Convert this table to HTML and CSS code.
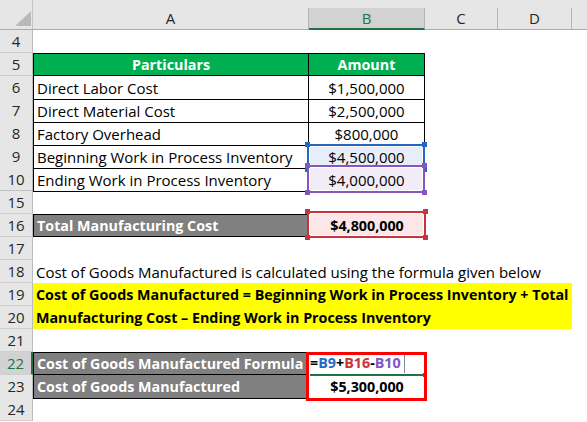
FILE: index.html
```html
<!DOCTYPE html>
<html>
<head>
<meta charset="utf-8">
<link rel="stylesheet" href="styles.css">
</head>
<body>
<div class="sheet">
  <div class="row colhead">
    <div class="corner"><svg width="33" height="30" viewBox="0 0 33 30"><polygon points="15,26 31,26 31,11" fill="#b9b9b9"/></svg></div>
    <div class="ch">A</div>
    <div class="ch sel">B</div>
    <div class="ch">C</div>
    <div class="ch">D</div>
    <div class="ch last"></div>
  </div>

  <div class="row"><div class="rh">4</div></div>

  <div class="row">
    <div class="rh">5</div>
    <div class="c th first">Particulars</div>
    <div class="c th">Amount</div>
  </div>
  <div class="row">
    <div class="rh">6</div>
    <div class="c td first">Direct Labor Cost</div>
    <div class="c td num">$1,500,000</div>
  </div>
  <div class="row">
    <div class="rh">7</div>
    <div class="c td first">Direct Material Cost</div>
    <div class="c td num">$2,500,000</div>
  </div>
  <div class="row">
    <div class="rh">8</div>
    <div class="c td first">Factory Overhead</div>
    <div class="c td num">$800,000</div>
  </div>
  <div class="row">
    <div class="rh">9</div>
    <div class="c td first">Beginning Work in Process Inventory</div>
    <div class="c td num ref blue"><span class="hl"><i class="h tl"></i><i class="h tr"></i><i class="h bl"></i><i class="h br"></i></span><span class="v">$4,500,000</span></div>
  </div>
  <div class="row">
    <div class="rh hidden-after">10</div>
    <div class="c td first">Ending Work in Process Inventory</div>
    <div class="c td num ref purple"><span class="hl"><i class="h tl"></i><i class="h tr"></i><i class="h bl"></i><i class="h br"></i></span><span class="v">$4,000,000</span></div>
  </div>

  <div class="row"><div class="rh">15</div></div>

  <div class="row">
    <div class="rh">16</div>
    <div class="c grey first top">Total Manufacturing Cost</div>
    <div class="c num bold ref red"><span class="hl"><i class="h tl"></i><i class="h tr"></i><i class="h bl"></i><i class="h br"></i></span><span class="v">$4,800,000</span></div>
  </div>

  <div class="row"><div class="rh">17</div></div>

  <div class="row">
    <div class="rh">18</div>
    <div class="c span">Cost of Goods Manufactured is calculated using the formula given below</div>
  </div>
  <div class="row">
    <div class="rh">19</div>
    <div class="c yellow">Cost of Goods Manufactured = Beginning Work in Process Inventory + Total</div>
  </div>
  <div class="row">
    <div class="rh">20</div>
    <div class="c yellow">Manufacturing Cost – Ending Work in Process Inventory</div>
  </div>

  <div class="row"><div class="rh">21</div></div>

  <div class="row">
    <div class="rh active">22</div>
    <div class="c grey first top">Cost of Goods Manufactured Formula</div>
    <div class="c formula"><span>=</span><span class="fb">B9</span><span>+</span><span class="fr">B16</span><span>-</span><span class="fp">B10</span><span class="caret"></span><span class="active-edge"></span></div>
  </div>
  <div class="row">
    <div class="rh">23</div>
    <div class="c grey first">Cost of Goods Manufactured</div>
    <div class="c num bold">$5,300,000</div>
  </div>

  <div class="row"><div class="rh">24</div></div>

  <div class="range-box"></div>
</div>
</body>
</html>
```

FILE: styles.css
```css
* { box-sizing: border-box; }

html, body {
  margin: 0;
  padding: 0;
  background: #ffffff;
}

body {
  font-family: "Open Sans", "Liberation Sans", sans-serif;
  font-size: 15px;
  color: #000;
  overflow: hidden;
}

.sheet {
  position: relative;
  width: 587px;
  height: 422px;
  overflow: hidden;
}

.row {
  display: grid;
  grid-template-columns: 33px 276px 116px 73px 74px 1fr;
  height: 23px;
}

/* column header strip */
.colhead {
  height: 30px;
  background: #e6e6e6;
  border-bottom: 1px solid #ababab;
}

.corner {
  border-right: 1px solid #c4c4c4;
  height: 29px;
}

.corner svg { display: block; }

.ch {
  margin-top: 8px;
  height: 21px;
  border-right: 1px solid #b4b4b4;
  text-align: center;
  line-height: 21px;
  color: #262626;
}

.ch.sel {
  background: #d2d2d2;
  color: #217346;
  border-bottom: 2px solid #217346;
  height: 22px;
  line-height: 21px;
}

.ch.last { border-right: none; }

/* row headers */
.rh {
  background: #e6e6e6;
  border-right: 1px solid #bcbcbc;
  border-bottom: 1px solid #cfcfcf;
  text-align: center;
  line-height: 22px;
  color: #262626;
}

.rh.hidden-after { border-bottom: 2px solid #c2c2c2; }

.rh.active {
  background: #d2d2d2;
  color: #217346;
  border-right: 2px solid #217346;
}

/* cells */
.c {
  white-space: nowrap;
  line-height: 22px;
  padding: 1px 3px 0;
  position: relative;
}

.first { border-left: 1px solid #000; }

.th {
  background: #00b050;
  color: #fff;
  font-weight: 700;
  font-size: 14.3px;
  text-align: center;
  border-top: 1px solid #000;
  border-right: 1px solid #000;
  border-bottom: 1px solid #000;
  line-height: 20px;
}

.td {
  border-right: 1px solid #000;
  border-bottom: 1px solid #000;
}

.num { text-align: center; }

.bold { font-weight: 700; font-size: 14.3px; }

.grey {
  background: #808080;
  color: #fff;
  font-weight: 700;
  font-size: 14.3px;
  border-right: 1px solid #000;
  border-bottom: 1px solid #000;
}

.grey.top { border-top: 1px solid #000; line-height: 20px; }

.span { grid-column: 2 / 7; }

.yellow {
  grid-column: 2 / 6;
  background: #ffff00;
  font-weight: 700;
  font-size: 14.3px;
}

/* reference highlight boxes */
.ref .v { position: relative; }

.hl {
  position: absolute;
  left: -2px;
  right: -1px;
  top: -1px;
  bottom: -2px;
  border: 2px solid var(--rc);
  box-shadow: inset 0 0 0 1px #fff;
  background: var(--rf);
}

.blue { --rc: #2468c0; --rf: #e7eef9; }
.purple { --rc: #8656bd; --rf: #f1ecf8; }
.red { --rc: #c7343f; --rf: #fbe7e8; }

.purple .hl { top: -3px; }
.red .hl { top: -3px; bottom: -1px; }

.h {
  position: absolute;
  width: 5px;
  height: 5px;
  background: var(--rc);
}

.h.tl { left: -4px; top: -4px; }
.h.tr { right: -4px; top: -4px; }
.h.bl { left: -4px; bottom: -4px; }
.h.br { right: -4px; bottom: -4px; }

/* formula cell */
.formula {
  font-weight: 700;
  font-size: 14.3px;
  padding-left: 1px;
  padding-top: 0;
}

.fb { color: #1f6cc6; }
.fr { color: #c9333c; }
.fp { color: #8256c3; }

.caret {
  display: inline-block;
  width: 1px;
  height: 21px;
  background: #8a8a8a;
  vertical-align: top;
  margin-left: 3px;
}

.active-edge {
  position: absolute;
  left: 1px;
  right: 1px;
  bottom: -1px;
  height: 2px;
  background: #217346;
}

.active-edge::after {
  content: "";
  position: absolute;
  right: -3px;
  top: -1px;
  width: 4px;
  height: 4px;
  background: #217346;
}

.range-box {
  position: absolute;
  left: 306px;
  top: 352px;
  width: 121px;
  height: 49px;
  border: 3px solid #ff0000;
}
```
